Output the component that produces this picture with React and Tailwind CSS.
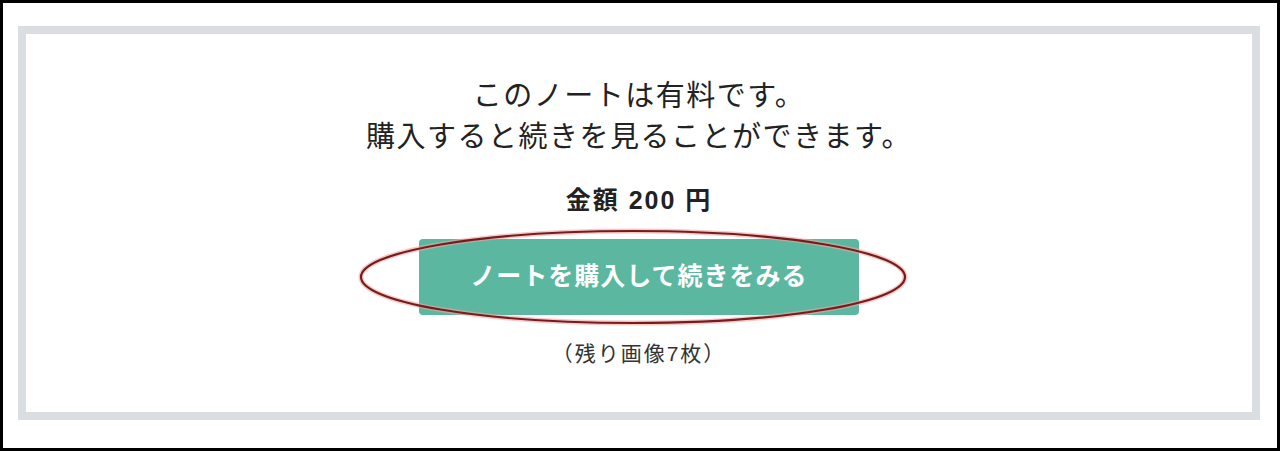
import React from 'react';

const font = { fontFamily: '"Liberation Sans", "Noto Sans CJK JP", sans-serif' };

// hand-drawn style ring around the purchase button
const Ring = () => (
    <svg
        className="absolute left-[-62px] top-[-12px] pointer-events-none"
        width="556"
        height="102"
        viewBox="0 0 556 102"
    >
        <ellipse cx="276" cy="50" rx="272" ry="46" fill="none" stroke="#f2a3a3" strokeWidth="5" opacity="0.6" />
        <ellipse cx="276" cy="50" rx="272" ry="46" fill="none" stroke="#761c1c" strokeWidth="2.2" />
    </svg>
);

const PaywallBox = ({ price, remaining }) => (
    <div className="mt-[23px] ml-[15px] mr-[17px] h-[394px] border-[8px] border-[#dadee2] flex flex-col items-center pt-[42px]">
        <p className="text-[29px] leading-[41px] text-[#222] text-center tracking-[1.5px]">
            このノートは有料です。
            <br />
            購入すると続きを見ることができます。
        </p>
        <p className="mt-[26px] text-[25px] leading-[32px] font-bold text-[#222] tracking-[2px]">
            金額 {price} 円
        </p>
        <div className="relative mt-[23px]">
            <button className="w-[440px] h-[76px] rounded-[4px] bg-[#5bb7a0] text-white text-[25px] font-bold tracking-[1px]">
                ノートを購入して続きをみる
            </button>
            <Ring />
        </div>
        <p className="mt-[25px] text-[21px] leading-[28px] text-[#333] tracking-[2px]">（残り画像{remaining}枚）</p>
    </div>
);

export default function App() {
    return (
        <div className="w-[1280px] h-[451px] bg-white border-[3px] border-black overflow-hidden" style={font}>
            <PaywallBox price={200} remaining={7} />
        </div>
    );
}
